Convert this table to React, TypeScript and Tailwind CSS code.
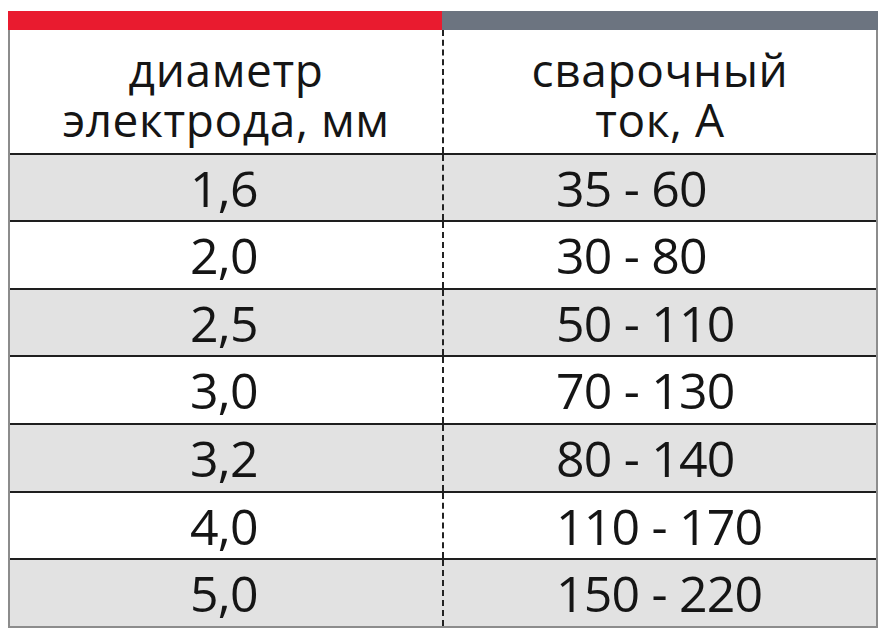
const rows: { d: string; a: string; h: string; gray: boolean }[] = [
  { d: "1,6", a: "35 - 60", h: "h-[67px]", gray: true },
  { d: "2,0", a: "30 - 80", h: "h-[68px]", gray: false },
  { d: "2,5", a: "50 - 110", h: "h-[67px]", gray: true },
  { d: "3,0", a: "70 - 130", h: "h-[68px]", gray: false },
  { d: "3,2", a: "80 - 140", h: "h-[68px]", gray: true },
  { d: "4,0", a: "110 - 170", h: "h-[67px]", gray: false },
  { d: "5,0", a: "150 - 220", h: "h-[68px]", gray: true },
];

export default function App() {
  return (
    <div className="h-[637px] w-[887px] bg-white pt-[11px] pl-[8px] text-[#151515] [font-family:'Open_Sans',sans-serif]">
      <div className="w-[870px]">
        {/* top colour bar */}
        <div className="flex h-[19px]">
          <div className="w-[434px] bg-[#e91b2f]" />
          <div className="flex-1 bg-[#6c7480]" />
        </div>

        <div className="border-x-2 border-b-2 border-[#8c8c8c]">
          {/* header */}
          <div className="flex h-[123px]">
            <div className="flex w-[432px] items-center justify-center pt-[4px] text-center text-[46px] leading-[50px] tracking-[0.6px]">
              <p>
                диаметр
                <br />
                электрода, мм
              </p>
            </div>
            <div className="flex flex-1 items-center justify-center border-l-2 border-dashed border-[#222] pt-[4px] text-center text-[46px] leading-[50px] tracking-[0.6px]">
              <p>
                сварочный
                <br />
                ток, А
              </p>
            </div>
          </div>

          {rows.map((r) => (
            <div
              key={r.d}
              className={`flex border-t-2 border-[#1e1e1e] text-[50px] tracking-[-0.8px] ${r.h} ${r.gray ? "bg-[#e2e2e2]" : "bg-white"}`}
            >
              <div className="flex w-[432px] items-center pl-[180px] leading-none">{r.d}</div>
              <div className="flex flex-1 items-center border-l-2 border-dashed border-[#222] pl-[112px] leading-none">
                {r.a}
              </div>
            </div>
          ))}
        </div>
      </div>
    </div>
  );
}
